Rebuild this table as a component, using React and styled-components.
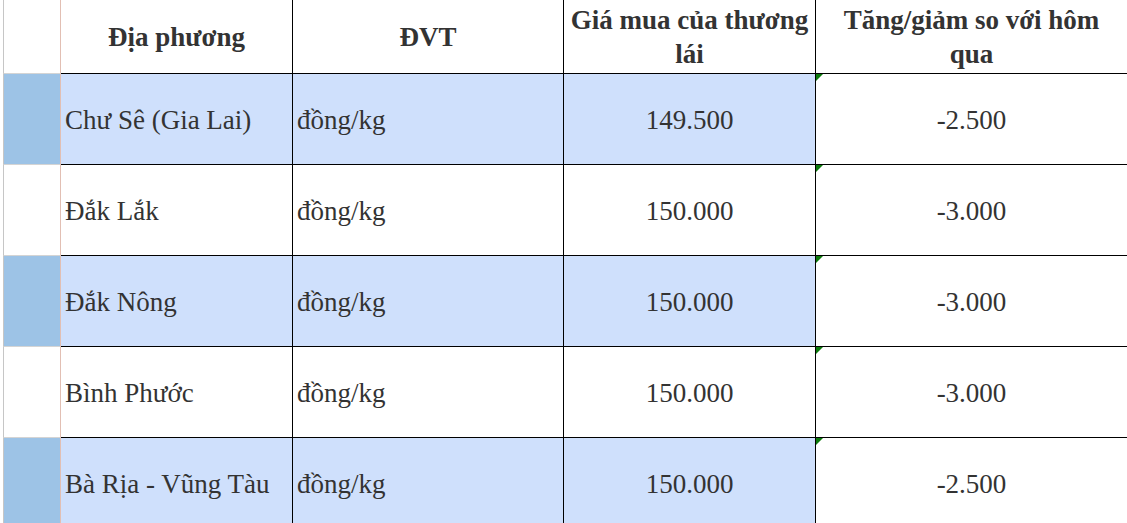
import React from "react";
import styled, { createGlobalStyle, css } from "styled-components";

const Global = createGlobalStyle`
  html, body { margin: 0; padding: 0; background: #fff; overflow: hidden; }
  body { font-family: "Liberation Serif", "Times New Roman", serif; }
`;

const Sheet = styled.div`
  padding-left: 3px;
  width: 1127px;
  height: 523px;
  overflow: hidden;
  box-sizing: border-box;
`;

const Grid = styled.div`
  display: grid;
  grid-template-columns: 58px 232px 271px 252px 311px;
  grid-template-rows: 74px repeat(5, 91px);
  color: #333;
`;

const RowHead = styled.div`
  box-sizing: border-box;
  border-left: 1px solid #c6c6c6;
  border-right: 1px solid #e2bfb3;
  border-bottom: 1px solid #d4d4d4;
  background: ${(p) => (p.$hl ? "#9dc3e6" : "#fff")};
`;

const Cell = styled.div`
  box-sizing: border-box;
  position: relative;
  display: flex;
  align-items: center;
  justify-content: ${(p) => (p.$align === "left" ? "flex-start" : "center")};
  text-align: ${(p) => (p.$align === "left" ? "left" : "center")};
  padding: ${(p) => (p.$align === "left" ? "2px 0 0 4px" : "2px 2px 0")};
  border-right: ${(p) => (p.$last ? "none" : "1px solid #000")};
  border-bottom: 1px solid #000;
  background: ${(p) => (p.$hl ? "#cfe0fc" : "#fff")};
  font-size: 27px;
  line-height: 34px;
  white-space: nowrap;
  ${(p) =>
    p.$head &&
    css`
      font-weight: bold;
      font-size: 27px;
      white-space: normal;
      padding: 1px 4px 0;
    `}
  ${(p) =>
    p.$flag &&
    css`
      &::before {
        content: "";
        position: absolute;
        top: 0;
        left: 0;
        border-top: 7px solid #0b7a0b;
        border-right: 7px solid transparent;
      }
    `}
`;

const headers = ["Địa phương", "ĐVT", "Giá mua của thương lái", "Tăng/giảm so với hôm qua"];

const rows = [
  ["Chư Sê (Gia Lai)", "đồng/kg", "149.500", "-2.500"],
  ["Đắk Lắk", "đồng/kg", "150.000", "-3.000"],
  ["Đắk Nông", "đồng/kg", "150.000", "-3.000"],
  ["Bình Phước", "đồng/kg", "150.000", "-3.000"],
  ["Bà Rịa - Vũng Tàu", "đồng/kg", "150.000", "-2.500"],
];

export default function App() {
  return (
    <>
      <Global />
      <Sheet>
        <Grid>
          <RowHead />
          {headers.map((h, i) => (
            <Cell key={h} $head $last={i === 3}>
              {h}
            </Cell>
          ))}
          {rows.map((r, ri) => {
            const hl = ri % 2 === 0;
            return (
              <React.Fragment key={ri}>
                <RowHead $hl={hl} />
                <Cell $align="left" $hl={hl}>{r[0]}</Cell>
                <Cell $align="left" $hl={hl}>{r[1]}</Cell>
                <Cell $hl={hl}>{r[2]}</Cell>
                <Cell $last $flag>{r[3]}</Cell>
              </React.Fragment>
            );
          })}
        </Grid>
      </Sheet>
    </>
  );
}
